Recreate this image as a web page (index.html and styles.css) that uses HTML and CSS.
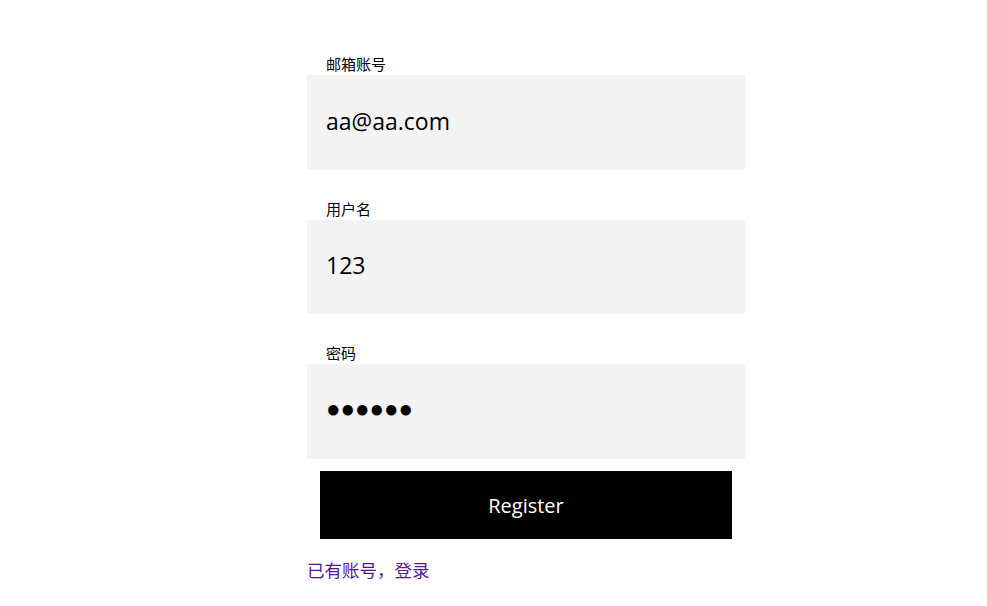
FILE: index.html
```html
<!DOCTYPE html>
<html lang="zh-CN">
<head>
<meta charset="utf-8">
<title>Register</title>
<link rel="stylesheet" href="styles.css">
</head>
<body>
<form class="form">
  <div class="field">
    <label class="label" for="email">邮箱账号</label>
    <input class="input" id="email" type="text" value="aa@aa.com">
  </div>
  <div class="field">
    <label class="label" for="user">用户名</label>
    <input class="input" id="user" type="text" value="123">
  </div>
  <div class="field field-last">
    <label class="label" for="pwd">密码</label>
    <input class="input input-pwd" id="pwd" type="text" value="●●●●●●">
  </div>
  <button class="btn" type="button">Register</button>
  <a class="link" href="#">已有账号，登录</a>
</form>
</body>
</html>
```
FILE: styles.css
```css
html, body {
  margin: 0;
  padding: 0;
  background: #fff;
}
body {
  font-family: "Open Sans", "Noto Sans CJK SC", sans-serif;
  color: #000;
}
.form {
  width: 438px;
  margin: 0 0 0 307px;
  padding-top: 55px;
  display: flex;
  flex-direction: column;
}
.field {
  display: flex;
  flex-direction: column;
  margin-bottom: 30px;
}
.field-last {
  margin-bottom: 12.5px;
}
.label {
  font-family: "Noto Sans CJK SC", sans-serif;
  font-size: 15px;
  line-height: 17px;
  height: 17px;
  padding-bottom: 3px;
  padding-left: 19px;
}
.input {
  box-sizing: border-box;
  height: 94.5px;
  width: 100%;
  border: none;
  outline: none;
  background: #f3f3f3;
  padding: 0 19px 3px;
  font-family: "Open Sans", "Noto Sans CJK SC", sans-serif;
  font-size: 23px;
  color: #000;
  margin: 0;
}
.input-pwd {
  font-family: "Liberation Sans", sans-serif;
  font-size: 24px;
  padding-bottom: 4px;
}
.btn {
  box-sizing: border-box;
  margin: 0 13px;
  height: 68px;
  border: none;
  background: #000;
  color: #fff;
  font-family: "Open Sans", sans-serif;
  font-size: 20px;
  cursor: pointer;
}
.link {
  margin-top: 19px;
  align-self: flex-start;
  font-family: "Noto Sans CJK SC", sans-serif;
  font-size: 17.5px;
  line-height: 24px;
  color: #551a8b;
  text-decoration: none;
}
```
